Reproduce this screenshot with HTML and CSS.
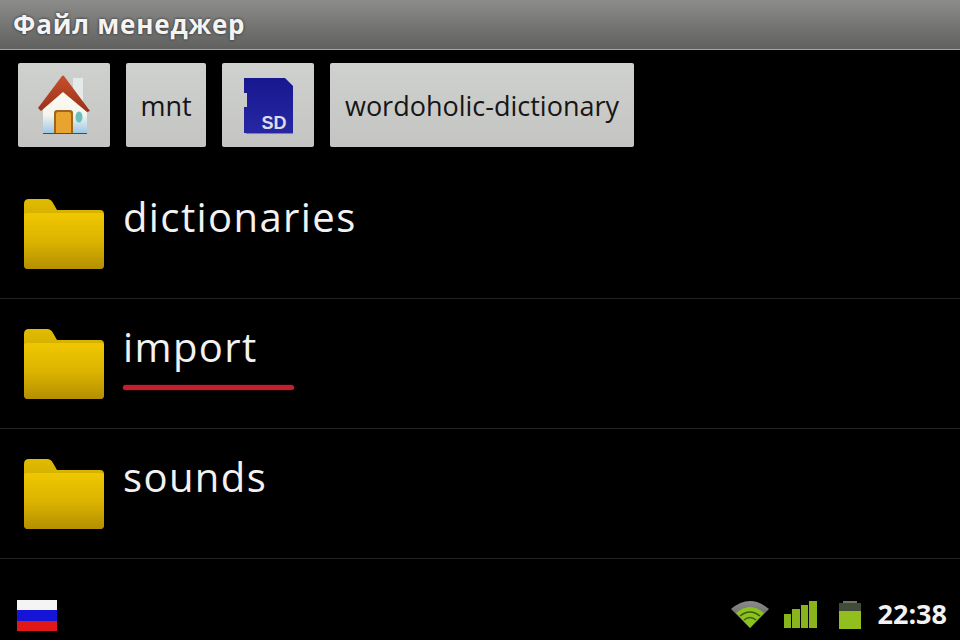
FILE: index.html
```html
<!DOCTYPE html>
<html lang="ru">
<head>
    <meta charset="UTF-8">
    <title>Файл менеджер</title>
    <link rel="stylesheet" href="styles.css">
</head>
<body>
    <svg class="defs" width="0" height="0">
        <defs>
            <linearGradient id="folderBody" x1="0" y1="0" x2="0" y2="1">
                <stop offset="0" stop-color="#efc700"/>
                <stop offset="0.5" stop-color="#dcb400"/>
                <stop offset="1" stop-color="#b48f00"/>
            </linearGradient>
            <linearGradient id="folderTab" x1="0" y1="0" x2="0" y2="1">
                <stop offset="0" stop-color="#e2bc00"/>
                <stop offset="1" stop-color="#a88800"/>
            </linearGradient>
            <linearGradient id="houseWall" x1="0" y1="0" x2="0" y2="1">
                <stop offset="0" stop-color="#fffdf0"/>
                <stop offset="0.6" stop-color="#f3f4ee"/>
                <stop offset="1" stop-color="#9cc8e6"/>
            </linearGradient>
            <linearGradient id="houseRoof" x1="0" y1="0" x2="0" y2="1">
                <stop offset="0" stop-color="#c8502c"/>
                <stop offset="1" stop-color="#98301a"/>
            </linearGradient>
            <linearGradient id="sdBody" x1="0" y1="0" x2="0" y2="1">
                <stop offset="0" stop-color="#17178f"/>
                <stop offset="1" stop-color="#2727a4"/>
            </linearGradient>
            <linearGradient id="wifiOuter" x1="0" y1="0" x2="0" y2="1">
                <stop offset="0" stop-color="#8a8c8a"/>
                <stop offset="1" stop-color="#585a58"/>
            </linearGradient>
            <symbol id="folder" viewBox="0 0 80 70">
                <path d="M5 0H23Q27 0 29 4L33 11H76Q80 11 80 15V66Q80 70 76 70H4Q0 70 0 66V5Q0 0 5 0Z" fill="url(#folderTab)"/>
                <path d="M0 16Q0 14 3 14H77Q80 14 80 16V66Q80 70 76 70H4Q0 70 0 66Z" fill="url(#folderBody)"/>
            </symbol>
        </defs>
    </svg>

    <header class="title-bar">Файл менеджер</header>

    <nav class="path-bar">
        <button class="crumb crumb-icon">
            <svg width="52" height="60" viewBox="0 0 52 60">
                <path d="M35 3H45V28H35Z" fill="#e4eaea"/>
                <path d="M5 32L25 14L49 32V56Q49 58 47 58H7Q5 58 5 56Z" fill="url(#houseWall)"/>
                <path d="M0 33L24 1Q25 0 26 1L52 36L49 37L25 17L3 36Z" fill="url(#houseRoof)"/>
                <path d="M16 38Q16 35 19 35H32Q35 35 35 38V58H16Z" fill="#a0641c"/>
                <path d="M18 39Q18 37 20 37H31Q33 37 33 39V58H18Z" fill="#e8a42e"/>
                <ellipse cx="41" cy="42" rx="3.5" ry="5.5" fill="#6cc0bc"/>
                <path d="M5 58H49V59H5Z" fill="#3a5064"/>
            </svg>
        </button>
        <button class="crumb crumb-mnt">mnt</button>
        <button class="crumb crumb-icon">
            <svg width="50" height="58" viewBox="0 0 50 58">
                <path d="M1 2H42L50 10V57H1V31H4V17H1Z" fill="url(#sdBody)"/>
                <path d="M3 57H50V58H3Z" fill="#7f8488"/>
                <text x="31" y="53" class="sd-label">SD</text>
            </svg>
        </button>
        <button class="crumb crumb-wide">wordoholic-dictionary</button>
    </nav>

    <ul class="file-list">
        <li class="file-row">
            <svg class="folder-icon" width="80" height="70"><use href="#folder"/></svg>
            <div class="file-name">dictionaries</div>
        </li>
        <li class="file-row">
            <svg class="folder-icon" width="80" height="70"><use href="#folder"/></svg>
            <div class="file-name">import<span class="focus-line"></span></div>
        </li>
        <li class="file-row">
            <svg class="folder-icon" width="80" height="70"><use href="#folder"/></svg>
            <div class="file-name">sounds</div>
        </li>
    </ul>

    <footer class="status-bar">
        <div class="flag">
            <span class="flag-white"></span>
            <span class="flag-blue"></span>
            <span class="flag-red"></span>
        </div>
        <div class="status-right">
            <svg class="wifi" width="38" height="29" viewBox="0 0 38 29">
                <path d="M0 10Q19 -6 38 10L19 29Z" fill="url(#wifiOuter)"/>
                <path d="M5 14Q19 2 33 14L19 29Z" fill="#8cc21e"/>
                <path d="M9 17Q19 9 29 17M13 21Q19 16 25 21" fill="none" stroke="#3c5c08" stroke-width="1.5"/>
            </svg>
            <div class="signal">
                <span class="signal-bar bar-1"></span>
                <span class="signal-bar bar-2"></span>
                <span class="signal-bar bar-3"></span>
                <span class="signal-bar bar-4"></span>
            </div>
            <div class="battery">
                <span class="battery-cap"></span>
                <span class="battery-empty"></span>
                <span class="battery-fill"></span>
            </div>
            <div class="clock">22:38</div>
        </div>
    </footer>
</body>
</html>
```

FILE: styles.css
```css
html, body {
    margin: 0;
    height: 100%;
}

body {
    width: 960px;
    height: 640px;
    overflow: hidden;
    background-color: #000;
    color: #fff;
    font-family: "Open Sans", "Noto Sans", sans-serif;
    display: flex;
    flex-direction: column;
}

.defs {
    position: absolute;
}

.title-bar {
    height: 49px;
    padding-left: 13px;
    line-height: 49px;
    font-size: 26px;
    font-weight: 700;
    letter-spacing: 0.8px;
    color: #f4f4f4;
    text-shadow: 0 0 3px rgba(0,0,0,0.7);
    background: linear-gradient(#8c8c8a, #60605f);
    border-bottom: 1px solid #a5a5a3;
}

.path-bar {
    display: flex;
    gap: 16px;
    padding: 13px 18px 0;
    height: 84px;
}

.crumb {
    height: 84px;
    padding: 0;
    border: none;
    border-radius: 2px;
    background: linear-gradient(#cfd1ce, #c4c5c3);
    color: #161616;
    font-family: "Open Sans", "Noto Sans", sans-serif;
    font-size: 27px;
    display: flex;
    align-items: center;
    justify-content: center;
}

.crumb-icon {
    width: 92px;
}

.crumb-mnt {
    width: 80px;
}

.crumb-wide {
    width: 304px;
}

.sd-label {
    font-family: "Liberation Sans", sans-serif;
    font-size: 18px;
    font-weight: 700;
    fill: #dcdcea;
    text-anchor: middle;
}

.file-list {
    list-style: none;
    margin: 22px 0 0;
    padding: 0;
}

.file-row {
    height: 129px;
    display: flex;
    align-items: flex-start;
    gap: 19px;
    padding-left: 24px;
    border-bottom: 1px solid #232323;
}

.folder-icon {
    margin-top: 30px;
    flex: none;
}

.file-name {
    position: relative;
    margin-top: 20px;
    font-size: 40px;
    line-height: 56px;
    letter-spacing: 1.4px;
    color: #f2f2f2;
}

.focus-line {
    position: absolute;
    left: 0;
    top: 66px;
    width: 171px;
    height: 5px;
    border-radius: 3px;
    background-color: #c3202f;
    box-shadow: 0 0 2px #7a101c;
}

.status-bar {
    flex: 1;
    display: flex;
    justify-content: space-between;
    align-items: flex-start;
    padding: 40px 13px 0 17px;
}

.flag {
    width: 40px;
    height: 31px;
    margin-top: 1px;
    display: flex;
    flex-direction: column;
}

.flag span {
    flex: 1;
}

.flag-white {
    background-color: #f4f4f4;
}

.flag-blue {
    background-color: #1515d8;
}

.flag-red {
    background-color: #e01818;
}

.status-right {
    display: flex;
    align-items: flex-start;
}

.signal {
    display: flex;
    align-items: flex-end;
    gap: 1px;
    height: 27px;
    margin: 2px 0 0 15px;
}

.signal-bar {
    width: 7.5px;
    background-color: #8ab41c;
}

.bar-1 {
    height: 14px;
}

.bar-2 {
    height: 19px;
}

.bar-3 {
    height: 23px;
}

.bar-4 {
    height: 27px;
}

.battery {
    width: 22px;
    margin: 2px 0 0 22px;
    display: flex;
    flex-direction: column;
    align-items: center;
}

.battery-cap {
    width: 14px;
    height: 2px;
    background-color: #6d7364;
}

.battery-empty {
    width: 22px;
    height: 8px;
    background-color: #414c38;
}

.battery-fill {
    width: 22px;
    height: 18px;
    background-color: #93bf1e;
}

.clock {
    margin: -3px 0 0 17px;
    font-size: 27px;
    line-height: 36px;
    font-weight: 700;
    color: #f2f2f2;
}
```
